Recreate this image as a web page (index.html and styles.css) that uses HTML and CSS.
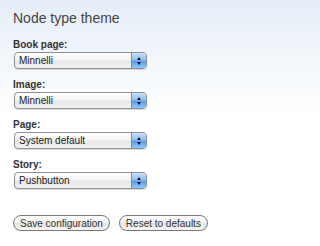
FILE: index.html
```html
<!DOCTYPE html>
<html>
<head>
<meta charset="utf-8">
<link rel="stylesheet" href="styles.css">
</head>
<body>
<div class="page">
  <h2 class="title">Node type theme</h2>
  <div class="field">
    <div class="label">Book page:</div>
    <div class="select"><span class="value">Minnelli</span><span class="arrows"><i class="up"></i><i class="down"></i></span></div>
  </div>
  <div class="field">
    <div class="label">Image:</div>
    <div class="select"><span class="value">Minnelli</span><span class="arrows"><i class="up"></i><i class="down"></i></span></div>
  </div>
  <div class="field">
    <div class="label">Page:</div>
    <div class="select"><span class="value">System default</span><span class="arrows"><i class="up"></i><i class="down"></i></span></div>
  </div>
  <div class="field">
    <div class="label">Story:</div>
    <div class="select"><span class="value">Pushbutton</span><span class="arrows"><i class="up"></i><i class="down"></i></span></div>
  </div>
  <div class="buttons">
    <button class="btn">Save configuration</button>
    <button class="btn">Reset to defaults</button>
  </div>
</div>
</body>
</html>
```

FILE: styles.css
```css
html {
  background: linear-gradient(to bottom, #e5edf7 0px, #f3f7fb 60px, #ffffff 120px) no-repeat;
  background-color: #ffffff;
  min-height: 100%;
}
body {
  margin: 0;
  padding: 0;
  font-family: "Liberation Sans", Arial, sans-serif;
}
.page {
  padding: 10px 0 0 13px;
  display: flex;
  flex-direction: column;
}
.title {
  margin: 0 0 13px 0;
  font-size: 14px;
  line-height: 16px;
  font-weight: normal;
  color: #444;
}
.field {
  display: flex;
  flex-direction: column;
  gap: 1px;
  margin-bottom: 10px;
}
.label {
  font-size: 10px;
  line-height: 12px;
  font-weight: bold;
  color: #333;
}
.select {
  margin-left: 1px;
  width: 133px;
  height: 17px;
  box-sizing: border-box;
  border: 1px solid #8e8e8e;
  border-radius: 4px;
  display: flex;
  overflow: hidden;
  background: linear-gradient(to bottom, #ffffff 0%, #f4f4f4 45%, #e6e6e6 55%, #f3f3f3 100%);
  box-shadow: 0 1px 1px rgba(0,0,0,0.15);
}
.value {
  flex: 1;
  padding-left: 4px;
  font-size: 10px;
  line-height: 15px;
  color: #222;
}
.arrows {
  width: 14px;
  border-left: 1px solid #6f8fc0;
  background: linear-gradient(to bottom, #c6e0fb 0%, #8fc0f4 45%, #5a9cee 55%, #8cc8fb 100%);
  display: flex;
  flex-direction: column;
  align-items: center;
  justify-content: center;
  gap: 2px;
}
.arrows i {
  display: block;
  width: 0;
  height: 0;
  border-left: 2px solid transparent;
  border-right: 2px solid transparent;
}
.arrows .up {
  border-bottom: 3px solid #111;
}
.arrows .down {
  border-top: 3px solid #111;
}
.buttons {
  margin-top: 16px;
  display: flex;
  gap: 9px;
}
.btn {
  font-family: "Liberation Sans", Arial, sans-serif;
  font-size: 10px;
  line-height: 13px;
  height: 16px;
  padding: 0 6px;
  color: #333;
  border: 1px solid #7a7a7a;
  border-radius: 8px;
  background: linear-gradient(to bottom, #ffffff 0%, #f2f2f2 50%, #e4e4e4 51%, #f5f5f5 100%);
  box-shadow: 0 1px 1px rgba(0,0,0,0.12);
}
```
